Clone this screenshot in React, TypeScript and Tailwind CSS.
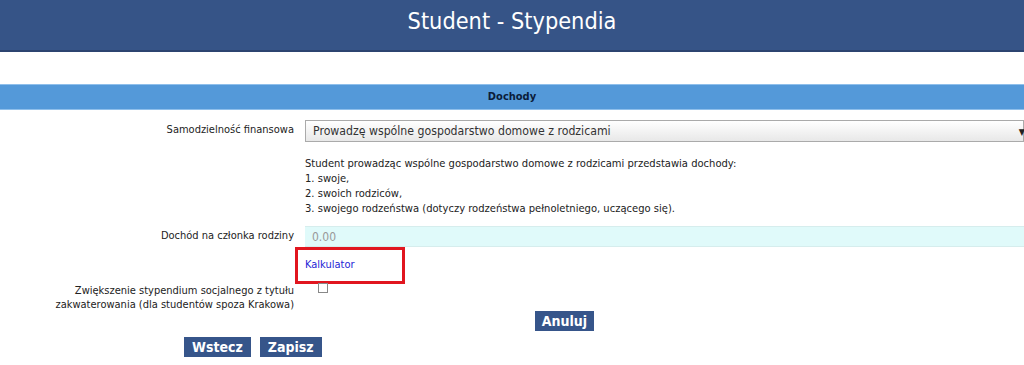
import { ChangeEvent, useState } from "react"

const font = "font-['DejaVu_Sans_Condensed','Liberation_Sans',sans-serif]"

function Label({ children }: { children: React.ReactNode }) {
  return <div className="w-[296px] shrink-0 pr-[2px] text-right leading-[14px] text-[#222]">{children}</div>
}

export default function App() {
  const [income, setIncome] = useState("")
  const [housing, setHousing] = useState(false)

  return (
    <div className={`${font} min-h-screen bg-white text-[11px] text-[#222]`}>
      {/* Header */}
      <div className="flex h-[52px] items-start justify-center border-b-2 border-[#2c4470] bg-[#365487]">
        <h1 className="mt-[6px] text-[23.3px] leading-[30px] text-white">Student - Stypendia</h1>
      </div>

      {/* Section bar */}
      <div className="mt-[32px] flex h-[26px] items-center justify-center border-y border-[#8fbfeb] bg-[#5499d9]">
        <span className="text-[11px] font-bold text-[#0b1c3a]">Dochody</span>
      </div>

      {/* Samodzielność finansowa */}
      <div className="mt-[10px] flex items-start gap-[9px]">
        <div className="pt-[3px]">
          <Label>Samodzielność finansowa</Label>
        </div>
        <div className="relative flex h-[22px] flex-1 items-center border border-[#aaa] bg-gradient-to-b from-white to-[#e8e8e8] pl-[7px] text-[12.2px] text-[#333]">
          Prowadzę wspólne gospodarstwo domowe z rodzicami
          <span className="absolute right-[-2px] top-[5px] text-[9px] text-[#222]">▼</span>
        </div>
      </div>

      {/* Description */}
      <div className="mt-[14px] flex gap-[9px]">
        <div className="w-[296px] shrink-0" />
        <div className="text-[11.1px] leading-[15px]">
          <p>Student prowadząc wspólne gospodarstwo domowe z rodzicami przedstawia dochody:</p>
          <p>1. swoje,</p>
          <p>2. swoich rodziców,</p>
          <p>3. swojego rodzeństwa (dotyczy rodzeństwa pełnoletniego, uczącego się).</p>
        </div>
      </div>

      {/* Dochód na członka rodziny */}
      <div className="mt-[10px] flex items-start gap-[9px]">
        <div className="pt-[3px]">
          <Label>Dochód na członka rodziny</Label>
        </div>
        <input
          value={income}
          placeholder="0.00"
          onChange={(e: ChangeEvent<HTMLInputElement>) => setIncome(e.target.value)}
          className="h-[21px] flex-1 border-y border-[#d6eded] bg-[#e0fafa] pl-[7px] text-[12px] text-[#333] outline-none placeholder:text-[#999]"
        />
      </div>

      {/* Kalkulator */}
      <div className="flex">
        <div className="w-[295px] shrink-0" />
        <div className="flex h-[37px] w-[110px] items-start border-[3px] border-[#e1161f] pl-[7px] pt-[7px]">
          <a href="#" className="text-[11px] text-[#1f1fd6]">
            Kalkulator
          </a>
        </div>
      </div>

      {/* Zwiększenie */}
      <div className="flex items-start gap-[9px]">
        <Label>
          Zwiększenie stypendium socjalnego z tytułu
          <br />
          zakwaterowania (dla studentów spoza Krakowa)
        </Label>
        <input
          type="checkbox"
          checked={housing}
          onChange={() => setHousing(!housing)}
          className="ml-[13px] mt-[-1px] h-[10px] w-[10px] appearance-none border border-[#888] bg-white"
        />
      </div>

      {/* Buttons */}
      <div className="mt-[-1px] flex justify-center pl-[105px]">
        <button className="h-[20px] bg-[#36558a] px-[7px] text-[14px] font-bold leading-[20px] text-white">Anuluj</button>
      </div>
      <div className="mt-[6px] flex gap-[9px] pl-[184px]">
        <button className="h-[20px] bg-[#36558a] px-[8px] text-[14px] font-bold leading-[20px] text-white">Wstecz</button>
        <button className="h-[20px] bg-[#36558a] px-[8px] text-[14px] font-bold leading-[20px] text-white">Zapisz</button>
      </div>
    </div>
  )
}
